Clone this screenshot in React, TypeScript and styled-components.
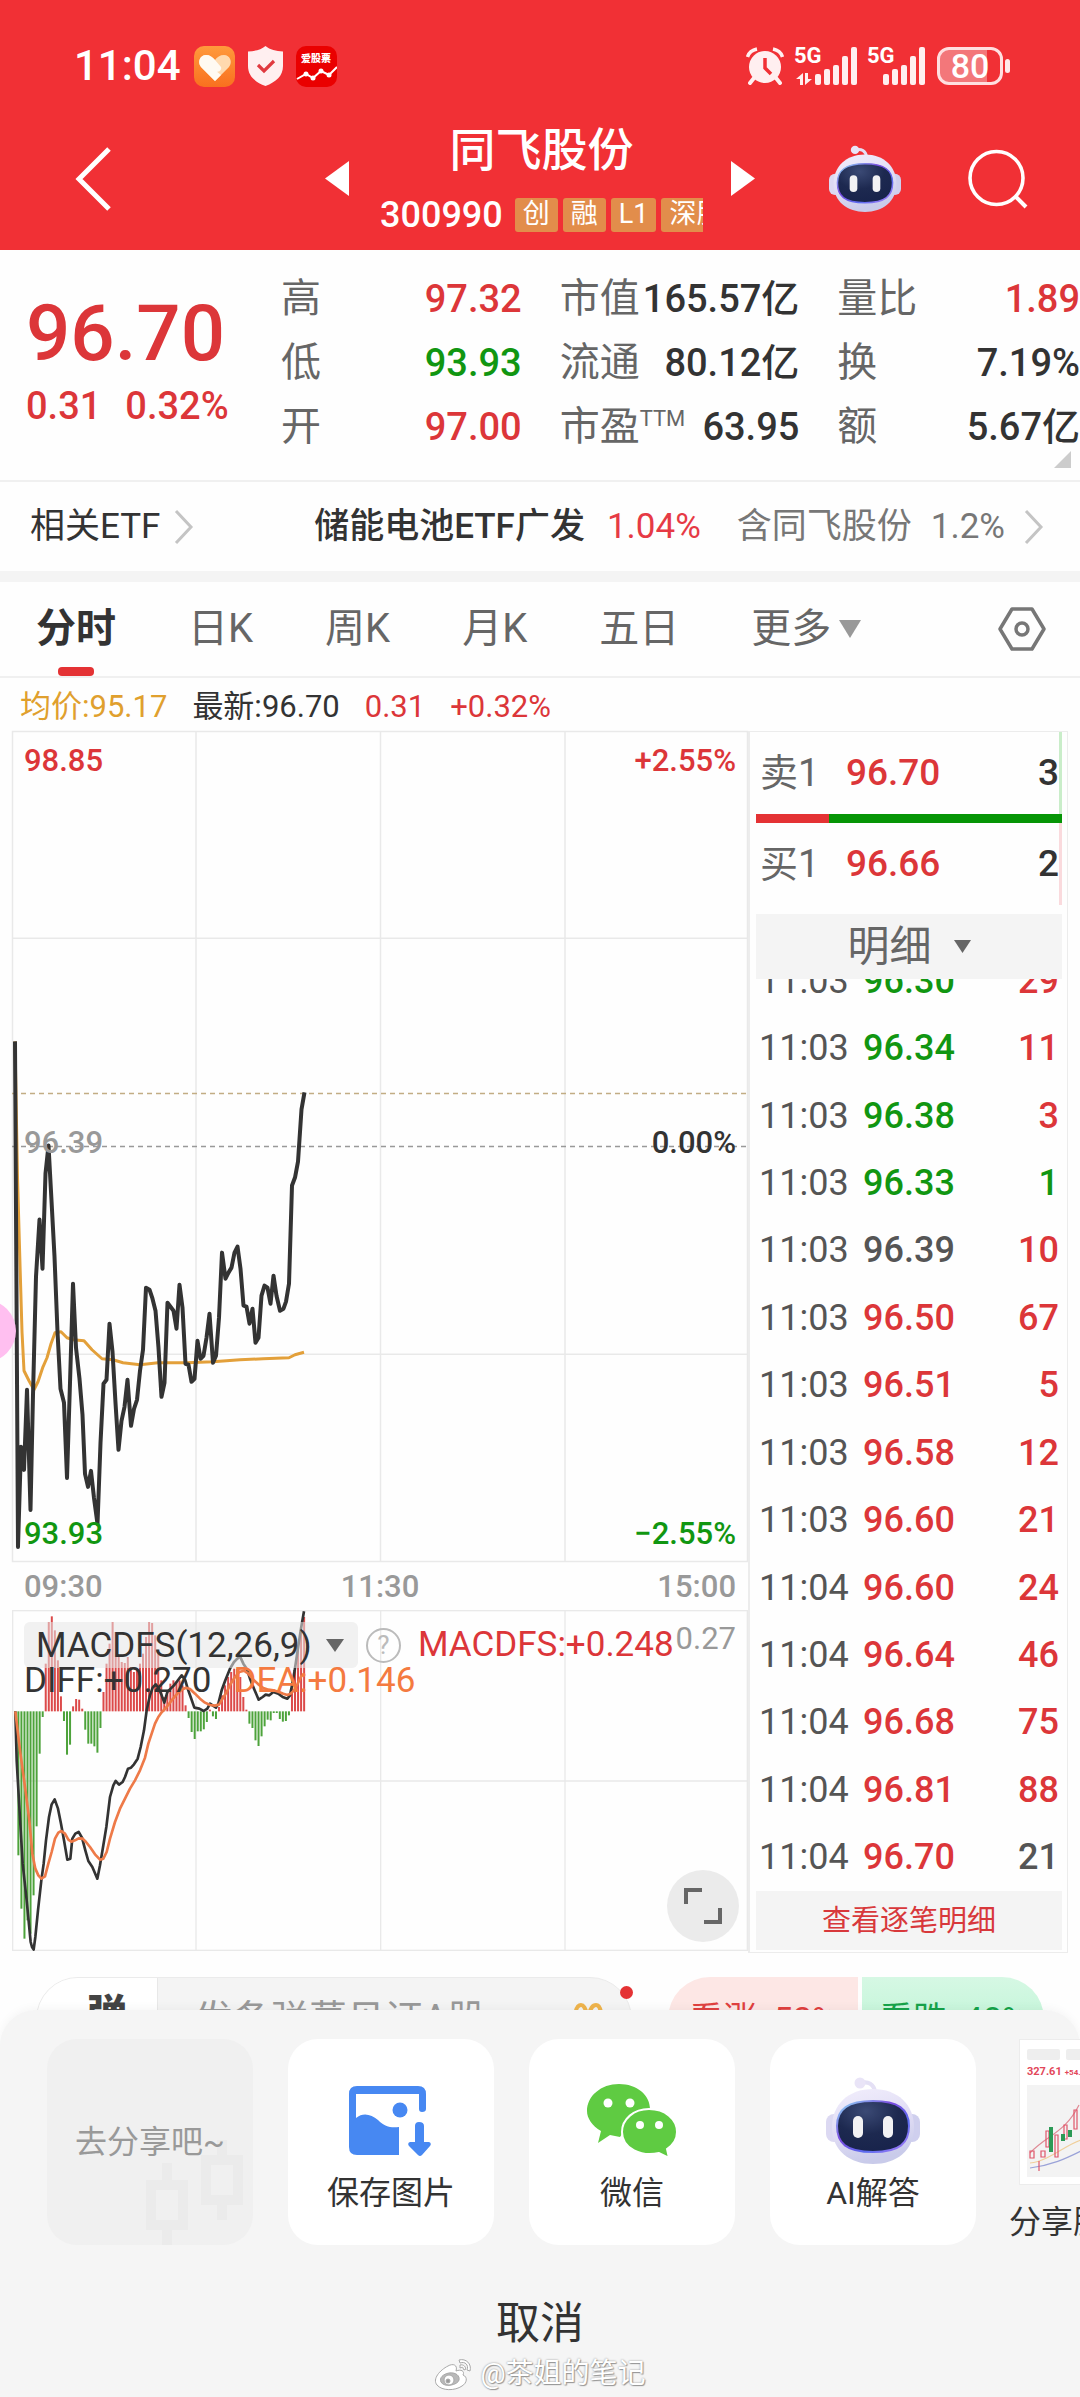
import React from 'react';
import styled, { createGlobalStyle } from 'styled-components';

const RED = '#dc3639';
const GREEN = '#119611';
const INK = '#333333';
const GRAY = '#666666';
const MUTED = '#999999';

const GlobalStyle = createGlobalStyle`
  * { box-sizing: border-box; }
  body {
    margin: 0;
    background: #ffffff;
    color: ${INK};
    font-family: Roboto, "Noto Sans CJK SC", sans-serif;
  }
  button, input {
    font: inherit;
    color: inherit;
    border: 0;
    padding: 0;
    margin: 0;
    background: none;
  }
  a { color: inherit; text-decoration: none; }
  svg { display: block; flex: none; }
`;

const Page = styled.div`
  position: relative;
  display: flex;
  flex-direction: column;
  min-height: 100vh;
  overflow: hidden;
  background: #fefefe;
`;

/* ---------- header ---------- */
const Header = styled.header`
  background: #f13035;
  color: #ffffff;
  height: 250px;
  display: flex;
  flex-direction: column;
`;

const StatusBar = styled.div`
  display: flex;
  align-items: center;
  justify-content: space-between;
  height: 66px;
  margin-top: 33px;
  padding: 0 70px 0 74px;
`;

const StatusGroup = styled.div<{ $gap: number }>`
  display: flex;
  align-items: center;
  gap: ${(p) => p.$gap}px;
`;

const Clock = styled.time`
  font-size: 42px;
  font-weight: 500;
  line-height: 48px;
`;

const AppBadge = styled.div`
  width: 41px;
  height: 41px;
  border-radius: 10px;
  background: #ea0000;
  display: flex;
  flex-direction: column;
  align-items: center;
  padding-top: 6px;
  font-size: 10px;
  font-weight: 900;
  line-height: 14px;
`;

const Battery = styled.div`
  display: flex;
  align-items: center;
  gap: 2px;
  &::after {
    content: "";
    width: 5px;
    height: 14px;
    border-radius: 3px;
    background: #ffe9ea;
  }
`;

const BatteryBody = styled.div`
  width: 66px;
  height: 38px;
  border: 3px solid #ffdfe0;
  border-radius: 12px;
  background: linear-gradient(90deg, #f3777a 78%, transparent 78%);
  font-size: 34px;
  font-weight: 500;
  line-height: 33px;
  text-align: center;
`;

const NavBar = styled.nav`
  flex: 1;
  display: grid;
  grid-template-columns: 325px 24px 1fr 24px 325px;
  align-items: center;
  padding-top: 8px;
`;

const IconButton = styled.button`
  display: inline-flex;
  align-items: center;
  justify-content: center;
`;

const NavStart = styled.div`
  padding-left: 75px;
  display: flex;
`;

const NavEnd = styled.div`
  padding: 0 52px 0 74px;
  display: flex;
  align-items: center;
  justify-content: space-between;
`;

const Title = styled.div`
  min-width: 0;
  display: flex;
  flex-direction: column;
  align-items: center;
  padding: 0 28px 4px 31px;
`;

const StockName = styled.h1`
  margin: 0;
  font-size: 46px;
  line-height: 62px;
  font-weight: 500;
`;

const CodeRow = styled.div`
  width: 100%;
  display: flex;
  align-items: center;
  gap: 5px;
  margin-top: 14px;
  overflow: hidden;
  white-space: nowrap;
`;

const Code = styled.span`
  font-size: 36px;
  line-height: 40px;
  font-weight: 500;
  margin-right: 7px;
`;

const Tag = styled.span`
  flex: none;
  height: 34px;
  padding: 0 8px;
  border-radius: 3px;
  background: #e28d4b;
  font-size: 27px;
  line-height: 33px;
`;

/* ---------- quote ---------- */
const Quote = styled.section`
  position: relative;
  display: grid;
  grid-template-columns: 217px 241fr 240fr 243fr;
  column-gap: 38px;
  padding: 16px 0 22px 26px;
  border-bottom: 2px solid #f0f0f0;
`;

const PriceBlock = styled.div`
  padding-top: 28px;
  color: ${RED};
  white-space: nowrap;
`;

const Price = styled.div`
  font-size: 78px;
  line-height: 80px;
  font-weight: 500;
`;

const Change = styled.div`
  display: flex;
  gap: 24px;
  margin-top: 10px;
  font-size: 38px;
  font-weight: 500;
  line-height: 44px;
`;

const StatList = styled.dl`
  margin: 0;
  min-width: 0;
`;

const Stat = styled.div`
  display: flex;
  justify-content: space-between;
  height: 64px;
  line-height: 66px;
  white-space: nowrap;
`;

const StatLabel = styled.dt`
  font-size: 40px;
  color: ${GRAY};
  sup {
    font-size: 22px;
    line-height: 22px;
    vertical-align: 14px;
  }
`;

const StatValue = styled.dd<{ $color: string }>`
  margin: 0;
  font-size: 38px;
  font-weight: 500;
  color: ${(p) => p.$color};
`;

const Corner = styled.span`
  position: absolute;
  right: 9px;
  bottom: 12px;
  border-left: 17px solid transparent;
  border-bottom: 17px solid #cccccc;
`;

/* ---------- related ETF ---------- */
const EtfRow = styled.section`
  display: flex;
  align-items: center;
  justify-content: space-between;
  height: 89px;
  padding: 0 36px 0 30px;
  font-size: 35px;
  line-height: 48px;
  white-space: nowrap;
`;

const EtfLink = styled.a`
  display: flex;
  align-items: center;
`;

const EtfName = styled.strong`
  font-weight: 500;
`;

const EtfRate = styled.span`
  color: #e63a45;
  margin: 0 36px 0 22px;
`;

const EtfNote = styled.span`
  color: #777777;
  margin-right: 19px;
`;

const Band = styled.div`
  height: 11px;
  background: #f4f4f4;
`;

/* ---------- tabs ---------- */
const Tabs = styled.div`
  display: flex;
  align-items: stretch;
  height: 96px;
  gap: 72px;
  padding: 0 34px 0 36px;
  border-bottom: 2px solid #f0f0f0;
`;

const Tab = styled.button<{ $active?: boolean }>`
  position: relative;
  display: flex;
  align-items: center;
  gap: 8px;
  font-size: 40px;
  line-height: 56px;
  color: ${(p) => (p.$active ? INK : GRAY)};
  font-weight: ${(p) => (p.$active ? 700 : 400)};
  &::after {
    content: "";
    display: ${(p) => (p.$active ? 'block' : 'none')};
    position: absolute;
    left: 50%;
    bottom: 0;
    width: 36px;
    height: 9px;
    margin-left: -18px;
    border-radius: 4px;
    background: #e43234;
  }
`;

const TabEnd = styled.div`
  margin-left: auto;
  display: flex;
  align-items: center;
`;

const Legend = styled.div`
  display: flex;
  gap: 25px;
  height: 53px;
  padding: 6px 20px 0;
  font-size: 31px;
  line-height: 46px;
  white-space: nowrap;
`;

const Tone = styled.span<{ $color: string }>`
  color: ${(p) => p.$color};
`;

/* ---------- charts ---------- */
const Board = styled.main`
  display: grid;
  grid-template-columns: minmax(0, 736fr) minmax(0, 320fr);
  padding: 0 12px;
`;

const ChartColumn = styled.div`
  min-width: 0;
`;

const ChartBox = styled.div<{ $height: number }>`
  position: relative;
  height: ${(p) => p.$height}px;
`;

const Plot = styled.svg`
  width: 100%;
  height: 100%;
  overflow: visible;
`;

const AxisRow = styled.div<{ $top: number }>`
  position: absolute;
  left: 12px;
  right: 12px;
  top: ${(p) => p.$top}px;
  display: flex;
  justify-content: space-between;
  font-size: 31px;
  font-weight: 500;
  line-height: 36px;
`;

const TimeAxis = styled.div`
  display: flex;
  justify-content: space-between;
  padding: 0 12px;
  height: 48px;
  font-size: 31px;
  font-weight: 500;
  line-height: 50px;
  color: ${MUTED};
`;

const MacdHead = styled.div`
  position: absolute;
  left: 12px;
  right: 12px;
  top: 12px;
  display: flex;
  align-items: center;
  white-space: nowrap;
`;

const MacdSelect = styled.button`
  display: flex;
  align-items: center;
  justify-content: space-between;
  width: 334px;
  height: 46px;
  padding: 0 14px 0 12px;
  border-radius: 6px;
  background: rgba(230, 230, 230, 0.55);
  font-size: 35px;
`;

const MacdValue = styled.span`
  font-size: 35px;
  line-height: 46px;
  color: ${RED};
`;

const MacdMax = styled.span`
  position: absolute;
  right: 0;
  top: -1px;
  font-size: 31px;
  line-height: 36px;
  color: ${MUTED};
`;

const MacdSub = styled.div`
  position: absolute;
  left: 12px;
  top: 51px;
  display: flex;
  gap: 22px;
  font-size: 35px;
  line-height: 40px;
  white-space: nowrap;
`;

const HelpButton = styled(IconButton)`
  width: 35px;
  height: 35px;
  margin: 0 17px 0 8px;
  border: 2px solid #bbbbbb;
  border-radius: 50%;
  color: #bbbbbb;
  font-size: 26px;
  line-height: 30px;
`;

const ExpandButton = styled(IconButton)`
  position: absolute;
  right: 9px;
  bottom: 9px;
  width: 72px;
  height: 72px;
  border-radius: 50%;
  background: #ebebeb;
`;

const FloatingDot = styled.div`
  position: absolute;
  left: -58px;
  top: 569px;
  width: 62px;
  height: 62px;
  border-radius: 50%;
  background: #ffbff0;
`;

/* ---------- order book ---------- */
const Book = styled.aside`
  min-width: 0;
  display: flex;
  flex-direction: column;
  border: 1px solid #ececec;
  border-left: 2px solid #ececec;
  padding: 0 5px 2px 6px;
`;

const BookRow = styled.div<{ $edge: string }>`
  display: grid;
  grid-template-columns: 86px 1fr auto;
  align-items: center;
  height: 82px;
  padding-left: 4px;
  border-right: 3px solid ${(p) => p.$edge};
  font-size: 37px;
  font-weight: 500;
  line-height: 50px;
`;

const BookLabel = styled.span`
  font-size: 38px;
  font-weight: 400;
  color: ${GRAY};
`;

const BookPrice = styled.span`
  color: ${RED};
`;

const Ratio = styled.div`
  height: 9px;
  background: linear-gradient(90deg, #e43234 24%, #069506 24%);
`;

const DetailButton = styled.button`
  display: flex;
  flex: none;
  align-items: center;
  justify-content: center;
  gap: 22px;
  height: 65px;
  margin-top: 9px;
  background: #f4f4f4;
  color: ${GRAY};
  font-size: 42px;
  line-height: 60px;
`;

const Ticks = styled.div`
  height: 912px;
  display: flex;
  flex-direction: column;
  justify-content: flex-end;
  overflow: hidden;
`;

const TickTable = styled.table`
  width: 100%;
  height: 944px;
  flex: none;
  border-collapse: collapse;
  font-size: 36px;
  font-weight: 500;
  line-height: 40px;
  color: #555555;
  td { padding: 0; }
`;

const TimeCell = styled.td`
  width: 107px;
  padding-left: 3px !important;
  font-weight: 400;
`;

const PriceCell = styled.td<{ $color: string }>`
  color: ${(p) => p.$color};
`;

const VolumeCell = styled.td<{ $color: string }>`
  color: ${(p) => p.$color};
  text-align: right;
  padding-right: 3px !important;
`;

const MoreLink = styled.a`
  height: 59px;
  background: #f4f4f4;
  color: #d8383b;
  font-size: 29px;
  line-height: 60px;
  text-align: center;
`;

/* ---------- comment bar ---------- */
const CommentBar = styled.div`
  display: flex;
  justify-content: space-between;
  height: 84px;
  margin-top: 24px;
  padding: 0 36px;
`;

const CommentBox = styled.form`
  position: relative;
  display: flex;
  width: 596px;
  border: 1px solid #ebebeb;
  border-radius: 42px;
  background: #f4f4f4;
`;

const CommentToggle = styled.button`
  width: 121px;
  border-right: 1px solid #e8e8e8;
  border-radius: 42px 0 0 42px;
  background: #ffffff;
  font-size: 40px;
  font-weight: 900;
  line-height: 40px;
  padding: 0 4px 8px 24px;
  color: #444444;
`;

const CommentInput = styled.input`
  flex: 1;
  min-width: 0;
  padding-left: 37px;
  font-size: 38px;
  line-height: 80px;
  &::placeholder { color: ${MUTED}; opacity: 1; }
`;

const EmojiSlot = styled.span`
  padding: 24px 26px 0 0;
`;

const RedDot = styled.span`
  position: absolute;
  top: 8px;
  right: -2px;
  width: 13px;
  height: 13px;
  border-radius: 50%;
  background: #e43234;
`;

const Votes = styled.div`
  display: flex;
  gap: 4px;
`;

const Vote = styled.button<{ $up?: boolean }>`
  width: ${(p) => (p.$up ? 190 : 182)}px;
  background: ${(p) => (p.$up ? '#fde7e5' : 'linear-gradient(180deg, #d6f8e4, #b4f3d0)')};
  color: ${(p) => (p.$up ? '#e0403f' : '#16a34a')};
  border-radius: ${(p) => (p.$up ? '42px 0 0 42px' : '0 42px 42px 0')};
  font-size: 34px;
  line-height: 80px;
  text-align: center;
  white-space: pre;
`;

/* ---------- share sheet ---------- */
const Sheet = styled.section`
  position: relative;
  flex: 1;
  display: flex;
  flex-direction: column;
  margin-top: -51px;
  padding-top: 29px;
  border-radius: 36px 36px 0 0;
  background: #f5f5f5;
  box-shadow: 0 -2px 10px rgba(0, 0, 0, 0.04);
`;

const ShareRow = styled.div`
  display: flex;
  gap: 35px;
  padding-left: 47px;
  overflow: hidden;
`;

const ShareCard = styled.button<{ $ghost?: boolean }>`
  position: relative;
  flex: none;
  display: flex;
  flex-direction: column;
  align-items: center;
  justify-content: ${(p) => (p.$ghost ? 'center' : 'flex-start')};
  width: 206px;
  height: 206px;
  padding-top: ${(p) => (p.$ghost ? 0 : 34)}px;
  border-radius: 30px;
  background: ${(p) => (p.$ghost ? '#f0f0f0' : '#ffffff')};
  color: ${(p) => (p.$ghost ? MUTED : INK)};
  font-size: 32px;
  line-height: 48px;
  overflow: hidden;
`;

const CardIcon = styled.span`
  height: 96px;
  display: flex;
  align-items: center;
`;

const GhostCandles = styled.svg`
  position: absolute;
  right: 6px;
  bottom: 0;
`;

const GhostText = styled.span`
  position: relative;
`;

const ShareImage = styled.button`
  flex: none;
  display: flex;
  flex-direction: column;
  align-items: center;
  width: 124px;
  font-size: 32px;
  line-height: 48px;
  white-space: nowrap;
`;

const Poster = styled.span`
  display: flex;
  flex-direction: column;
  width: 108px;
  height: 146px;
  margin-bottom: 13px;
  padding: 9px 7px;
  border: 1px solid #ececec;
  background: #ffffff;
  color: #e2485a;
  overflow: hidden;
`;

const PosterBars = styled.span`
  display: flex;
  gap: 6px;
  height: 11px;
  i { width: 33px; height: 11px; border-radius: 2px; background: #eeeeee; }
`;

const PosterPrice = styled.span`
  display: flex;
  align-items: baseline;
  gap: 3px;
  font-size: 11px;
  font-weight: 700;
  line-height: 24px;
  small { font-size: 8px; }
`;

const Cancel = styled.button`
  display: block;
  align-self: center;
  margin-top: 45px;
  padding: 0 40px;
  font-size: 44px;
  line-height: 66px;
`;

const Watermark = styled.div`
  display: flex;
  align-items: center;
  justify-content: center;
  gap: 7px;
  height: 34px;
  font-size: 28px;
  line-height: 34px;
  color: #ffffff;
  text-shadow: 0 0 2px #8a8a8a, 1px 1px 1px #9a9a9a;
`;

/* ---------- drawings ---------- */
const Triangle = ({ dir, w, h, color }: { dir: 'left' | 'right' | 'down'; w: number; h: number; color: string }) => {
  const d = { left: 'M10 0V10L0 5Z', right: 'M0 0V10L10 5Z', down: 'M0 0H10L5 10Z' }[dir];
  return (
    <svg width={w} height={h} viewBox="0 0 10 10" preserveAspectRatio="none" aria-hidden="true">
      <path d={d} fill={color} />
    </svg>
  );
};

const ChevronIcon = styled.svg<{ $gap: number }>`
  margin-left: ${(p) => p.$gap}px;
`;

const Chevron = ({ gap }: { gap: number }) => (
  <ChevronIcon $gap={gap} width="20" height="36" viewBox="0 0 20 36" fill="none" stroke="#c4c4c4" strokeWidth="3" aria-hidden="true">
    <path d="M2 2L17 18L2 34" />
  </ChevronIcon>
);

const Robot = ({ id, w, h }: { id: string; w: number; h: number }) => (
  <svg width={w} height={h} viewBox="0 0 94 88" aria-hidden="true">
    <defs>
      <linearGradient id={`${id}-shell`} x1="0" y1="0" x2="0.3" y2="1">
        <stop offset="0" stopColor="#f2eefc" />
        <stop offset="0.6" stopColor="#dfdcf4" />
        <stop offset="1" stopColor="#c9cbea" />
      </linearGradient>
      <linearGradient id={`${id}-rim`} x1="0" y1="0" x2="1" y2="1">
        <stop offset="0" stopColor="#8fe0f5" />
        <stop offset="0.4" stopColor="#7a4be0" />
        <stop offset="0.7" stopColor="#5b6cf0" />
        <stop offset="1" stopColor="#b07cf5" />
      </linearGradient>
      <radialGradient id={`${id}-face`} cx="0.4" cy="0.2" r="0.9">
        <stop offset="0" stopColor="#3b4a75" />
        <stop offset="0.5" stopColor="#1d2950" />
        <stop offset="1" stopColor="#17224a" />
      </radialGradient>
    </defs>
    <path d="M35 6C42 4 48 7 49 15" fill="none" stroke="#e4e0f5" strokeWidth="4" />
    <circle cx="34" cy="6" r="5.5" fill="#e9e4f7" />
    <rect x="0" y="37" width="16" height="28" rx="8" fill="#dcd9f2" />
    <rect x="78" y="37" width="16" height="28" rx="8" fill="#cfcfee" />
    <path d="M47 12C72 12 88 28 88 50C88 74 70 87 47 87C24 87 6 74 6 50C6 28 22 12 47 12Z" fill={`url(#${id}-shell)`} />
    <path d="M47 24C72 24 83 32 83 49C83 66 74 75 47 75C20 75 11 66 11 49C11 32 22 24 47 24Z" fill={`url(#${id}-face)`} stroke={`url(#${id}-rim)`} strokeWidth="2" />
    <rect x="27" y="39" width="10" height="22" rx="5" fill="#f2f2f4" />
    <rect x="57" y="39" width="10" height="22" rx="5" fill="#f2f2f4" />
  </svg>
);

const HeartIcon = () => (
  <svg width="41" height="41" viewBox="0 0 41 41" aria-hidden="true">
    <defs>
      <linearGradient id="heart-bg" x1="0" y1="0" x2="0" y2="1">
        <stop offset="0" stopColor="#ff9a3c" />
        <stop offset="1" stopColor="#f9701f" />
      </linearGradient>
    </defs>
    <rect width="41" height="41" rx="10" fill="url(#heart-bg)" />
    <path d="M21 35L7 21C3 16 6 9 12 9C16 9 19 11 21 14C23 11 26 9 30 9C36 9 39 16 35 21Z" fill="#ffd9ae" />
    <path d="M21 35L7 21C3 16 6 9 12 9C16 9 18 11 21 14L27 21C28 24 25 27 21 25L17 21L27 29Z" fill="#fffaf2" />
  </svg>
);

const ShieldIcon = () => (
  <svg width="35" height="40" viewBox="0 0 35 40" aria-hidden="true">
    <path d="M17.500 0C22 4 28 5 35 5.500V20C35 30 28 36 17.500 40C7 36 0 30 0 20V5.500C7 5 13 4 17.500 0Z" fill="#ffeff0" />
    <path d="M10 19L16 25L26 15" fill="none" stroke="#e03a40" strokeWidth="3.200" />
  </svg>
);

const AlarmIcon = () => (
  <svg width="38" height="38" viewBox="0 0 38 38" aria-hidden="true">
    <circle cx="19" cy="20" r="16" fill="#ffeff0" />
    <path d="M1.500 10C3 5 6 3 11 2M36.500 10C35 5 32 3 27 2" fill="none" stroke="#ffeff0" strokeWidth="3.500" />
    <path d="M8 31L4 36M30 31L34 36" stroke="#ffeff0" strokeWidth="4" strokeLinecap="round" />
    <path d="M19 11V21L25 27" fill="none" stroke="#f13035" strokeWidth="3.500" />
  </svg>
);

const SignalLabel = styled.span`
  position: absolute;
  left: -2px;
  top: -2px;
  font-size: 22px;
  font-weight: 700;
  line-height: 22px;
`;

const SignalBox = styled.span<{ $w: number }>`
  position: relative;
  width: ${(p) => p.$w}px;
  height: 38px;
`;

const Signal = ({ data }: { data?: boolean }) => {
  const w = data ? 61 : 56;
  return (
    <SignalBox $w={w}>
      <SignalLabel>5G</SignalLabel>
      <svg width={w} height="38" viewBox={`0 0 ${w} 38`} fill="#ffeff0" aria-hidden="true">
        {[38, 29, 20, 16, 11].map((h, i) => (
          <rect key={h} x={w - 6 - i * 9} y={38 - h} width="6" height={h} rx="2" />
        ))}
        {data && <path d="M0 32L7 26V38H4V32ZM16 32L9 38V26H12V32Z" />}
      </svg>
    </SignalBox>
  );
};

const SearchIcon = () => (
  <svg width="60" height="60" viewBox="0 0 60 60" fill="none" stroke="#ffffff" strokeWidth="3.600" aria-hidden="true">
    <circle cx="28.500" cy="29" r="26.500" />
    <path d="M47 47L58 58" strokeWidth="4" />
  </svg>
);

const SaveIcon = () => (
  <svg width="84" height="70" viewBox="0 0 84 70" aria-hidden="true">
    <path d="M8 0H69Q77 0 77 8V23Q77 26 73 26Q70 26 70 23V8H7V32C14 26 22 28 29 34C36 41 42 42 50 41V69H8Q0 69 0 61V8Q0 0 8 0Z" fill="#4788f2" />
    <circle cx="51" cy="24" r="7.500" fill="#4788f2" />
    <path d="M66 40Q66 36 70 36Q75 36 75 40V56H80Q83 57 81 60L73 69Q71 71 69 69L60 60Q58 57 61 56H66Z" fill="#4788f2" />
  </svg>
);

const WechatIcon = () => (
  <svg width="90" height="74" viewBox="0 0 90 74" fill="#5fcb42" aria-hidden="true">
    <path d="M32 0C50 0 63 11 63 25C47 25 34 36 35 50L33 53L23 51L11 59L14 47C5 42 0 34 0 27C0 12 14 0 32 0Z" />
    <path d="M62 25C78 25 90 35 90 48C90 55 86 61 80 65L82 74L72 69C55 73 35 65 35 48C35 35 47 25 62 25Z" stroke="#ffffff" strokeWidth="2" />
    <circle cx="21" cy="19" r="4.500" fill="#ffffff" />
    <circle cx="43" cy="19" r="4.500" fill="#ffffff" />
    <circle cx="53" cy="41" r="4" fill="#ffffff" />
    <circle cx="72" cy="41" r="4" fill="#ffffff" />
  </svg>
);

const WeiboIcon = () => (
  <svg width="39" height="34" viewBox="0 0 39 34" fill="#ffffff" stroke="#a8a8a8" strokeWidth="1" aria-hidden="true">
    <path d="M14 9C19 6 24 8 22 14C27 12 31 14 29 18C34 20 33 26 28 29C21 34 8 34 3 28C-2 22 6 13 14 9Z" />
    <path d="M15 16C22 15 26 19 25 23C24 28 10 31 7 25C5 21 9 17 15 16Z" fill="#b9b9b9" />
    <circle cx="15" cy="23" r="5" />
    <circle cx="14" cy="24" r="2" fill="#999999" />
    <path d="M25 3C32 1 38 7 36 14L33 13C35 8 31 4 26 6ZM26 8C29 7 33 10 31 13L29 12C30 10 28 10 26 11Z" />
  </svg>
);

/* ---------- data ---------- */
const stats = [
  [
    { label: '高', value: '97.32', color: RED },
    { label: '低', value: '93.93', color: GREEN },
    { label: '开', value: '97.00', color: RED },
  ],
  [
    { label: '市值', value: '165.57亿', color: INK },
    { label: '流通', value: '80.12亿', color: INK },
    { label: '市盈', sup: 'TTM', value: '63.95', color: INK },
  ],
  [
    { label: '量比', value: '1.89', color: RED },
    { label: '换', value: '7.19%', color: INK },
    { label: '额', value: '5.67亿', color: INK },
  ],
] as { label: string; value: string; color: string; sup?: string }[][];

const D = '#555555';
const ticks: [string, string, string, string, string][] = [
  ['11:03', '96.30', GREEN, '29', RED],
  ['11:03', '96.34', GREEN, '11', RED],
  ['11:03', '96.38', GREEN, '3', RED],
  ['11:03', '96.33', GREEN, '1', GREEN],
  ['11:03', '96.39', D, '10', RED],
  ['11:03', '96.50', RED, '67', RED],
  ['11:03', '96.51', RED, '5', RED],
  ['11:03', '96.58', RED, '12', RED],
  ['11:03', '96.60', RED, '21', RED],
  ['11:04', '96.60', RED, '24', RED],
  ['11:04', '96.64', RED, '46', RED],
  ['11:04', '96.68', RED, '75', RED],
  ['11:04', '96.81', RED, '88', RED],
  ['11:04', '96.70', RED, '21', D],
];

const priceLine =
  '3,310 6,815 9,715 12,738 15,658 18.5,778 21,663 24,545 27.5,488 30.5,537 33.5,442 36.5,414 39.5,469 42.5,525 45.5,600 48.5,657 52,671 55,746 58,651 61,552 64,616 67.5,647 70.5,683 73,742 76,755 79,739 82,766 85.5,792 88.5,711 91.5,652 94.5,648 97.5,592 100.5,620 103.5,671 106.5,718 109.5,689 112.5,675 115.5,648 119,694 122,677 125,668 128,639 131,618 134,556 137.5,558 140.5,567 143.5,579 146.5,616 149.5,665 152.5,651 155.5,571 158.5,575 161.5,579 164.5,597 167.5,553 170.5,576 173.5,632 176.5,633 179.5,650 182.5,647 185.5,609 188.5,627 191.5,624 194.5,606 197.5,582 201,631 204,624 207,586 210,521 213.5,547 216.5,541 219.5,536 222.5,521 225.5,515 228.5,537 231.5,574 234.5,575 237.5,592 240.5,577 243.5,611 246.5,606 249.5,564 252.5,554 255.5,556 258.5,572 261.5,544 264.5,564 268,579 271.5,577 274,570 277,552 280,454 283,446 286,430 289.5,378 292.5,361';

const averageLine =
  '3,310 5.5,446 8,533 10,600 12,639 17,649 22,658 26,650 31,635 35,626 39,612 43,601 49,600 55,606 61,608 72,609 80,618 90,627 101,628 111,631 128,633 146,631 175,631 201,630 228,628 251,627 277,626 283,623 292,620.5';

const MACD_ZERO = 304;
const macdBars = [
  0, -432, -592, -682, -627, -667, -552, -345, -127, -17, 143, 268, 285, 243, 153, 45, -29, -130, -100, 15, 37, 35, 8,
  -55, -97, -97, -105, -124, -50, 58, 143, 203, 268, 238, 163, 148, 145, 163, 133, 118, 128, 143, 173, 223, 268, 265,
  228, 178, 93, 43, 63, 83, 93, 88, 93, 78, 18, -20, -62, -83, -60, -60, -54, -32, 5, -15, -23, 13, 48, 78, 103, 118,
  128, 128, 103, 43, 5, -37, -50, -87, -104, -75, -45, -25, -27, -5, -5, -23, -31, -29, -12, 78, 133, 183, 238, 283,
];

const diffLine =
  '46,333 50,480 58,620 68,790 80,900 92,1025 96,1040 101,1048 106,1010 114,930 124,840 131,790 138,720 147,650 155,612 164,597 174,625 183,670 192,720 202,778 211,775 217,715 226,700 236,695 246,712 256,750 265,782 277,800 292,835 300,795 310,735 319,680 330,590 340,555 347,542 357,553 368,545 375,530 384,505 393,502 402,492 413,475 422,440 432,390 440,330 450,285 458,262 467,252 477,265 485,285 493,307 502,275 512,265 522,255 532,242 545,225 556,240 563,265 572,290 583,322 598,325 611,332 622,325 630,310 648,322 655,310 665,270 676,240 690,205 702,185 712,175 720,168 730,190 740,205 750,235 762,265 776,298 788,290 797,283 808,285 820,275 835,280 848,290 862,295 870,285 877,250 884,210 893,150 903,85 912,33';

const deaLine =
  '46,333 60,450 75,560 88,660 97,760 106,805 115,825 124,835 135,828 145,790 155,755 165,715 175,697 184,692 195,700 205,718 214,724 225,720 236,714 248,715 258,725 270,740 285,762 300,778 310,775 320,755 330,715 345,665 360,625 375,595 390,565 405,540 420,510 435,472 445,430 455,400 465,370 475,350 485,336 500,320 515,300 530,282 545,268 558,262 570,266 585,280 600,295 615,307 630,314 645,316 657,313 668,295 680,275 692,250 705,230 718,215 732,211 745,220 760,238 775,252 790,263 805,268 820,270 835,274 850,280 862,284 872,280 882,270 893,250 905,225';

const PriceChart = () => (
  <Plot viewBox="0 0 736 830" preserveAspectRatio="none" role="img" aria-label="分时走势">
    <g stroke="#e9e9e9" strokeWidth="1.500" fill="none">
      <rect x="0.500" y="0.500" width="735" height="829" />
      <path d="M184 0V830M368.500 0V830M553 0V830M0 207H736M0 622.500H736" />
    </g>
    <path d="M0 362H736" stroke="#c2ad84" strokeWidth="1.500" strokeDasharray="5 4" />
    <path d="M0 415H736" stroke="#999999" strokeWidth="1.500" strokeDasharray="5 4" />
    <polyline points={averageLine} fill="none" stroke="#e3a03a" strokeWidth="3" strokeLinejoin="round" />
    <polyline points={priceLine} fill="none" stroke="#333333" strokeWidth="4" strokeLinejoin="round" />
  </Plot>
);

const MacdChart = () => (
  <Plot viewBox="0 0 2208 1023" preserveAspectRatio="none" role="img" aria-label="MACD">
    <g stroke="#e9e9e9" strokeWidth="4" fill="none">
      <rect x="2" y="2" width="2204" height="1019" />
      <path d="M552 0V1023M1106 0V1023M1659 0V1023M0 513H2208" />
    </g>
    {macdBars.map((v, i) => (
      <rect
        key={i}
        x={7 + i * 9.12}
        width="6"
        y={v > 0 ? MACD_ZERO - v : MACD_ZERO}
        height={Math.abs(v)}
        fill={v > 0 ? '#dc4a4a' : '#4da33b'}
      />
    ))}
    <g transform="translate(-36 -29)" fill="none" strokeLinejoin="round">
      <polyline points={diffLine} stroke="#333333" strokeWidth="8" />
      <polyline points={deaLine} stroke="#ee7a48" strokeWidth="8" />
    </g>
  </Plot>
);

export default function App() {
  return (
    <Page>
      <GlobalStyle />
      <Header>
        <StatusBar>
          <StatusGroup $gap={13}>
            <Clock>11:04</Clock>
            <HeartIcon />
            <ShieldIcon />
            <AppBadge>
              爱股票
              <svg width="41" height="16" viewBox="0 0 41 16" fill="none" stroke="#ffffff" strokeWidth="2" aria-hidden="true">
                <path d="M1 13L10 8L17 12L25 5L33 9L41 1" />
                <g fill="#ffffff" stroke="none">
                  <circle cx="10" cy="8" r="2.500" />
                  <circle cx="17" cy="12" r="2.500" />
                  <circle cx="25" cy="5" r="2.500" />
                  <circle cx="33" cy="9" r="2.500" />
                </g>
              </svg>
            </AppBadge>
          </StatusGroup>
          <StatusGroup $gap={12}>
            <AlarmIcon />
            <Signal data />
            <Signal />
            <Battery>
              <BatteryBody>80</BatteryBody>
            </Battery>
          </StatusGroup>
        </StatusBar>
        <NavBar>
          <NavStart>
            <IconButton aria-label="返回">
              <svg width="37" height="64" viewBox="0 0 37 64" fill="none" stroke="#ffffff" strokeWidth="5" aria-hidden="true">
                <path d="M34 2L4 32L34 62" />
              </svg>
            </IconButton>
          </NavStart>
          <IconButton aria-label="上一只">
            <Triangle dir="left" w={24} h={35} color="#ffffff" />
          </IconButton>
          <Title>
            <StockName>同飞股份</StockName>
            <CodeRow>
              <Code>300990</Code>
              <Tag>创</Tag>
              <Tag>融</Tag>
              <Tag>L1</Tag>
              <Tag>深股通</Tag>
            </CodeRow>
          </Title>
          <IconButton aria-label="下一只">
            <Triangle dir="right" w={24} h={35} color="#ffffff" />
          </IconButton>
          <NavEnd>
            <IconButton aria-label="AI助手">
              <Robot id="nav" w={72} h={68} />
            </IconButton>
            <IconButton aria-label="搜索">
              <SearchIcon />
            </IconButton>
          </NavEnd>
        </NavBar>
      </Header>

      <Quote>
        <PriceBlock>
          <Price>96.70</Price>
          <Change>
            <span>0.31</span>
            <span>0.32%</span>
          </Change>
        </PriceBlock>
        {stats.map((col, i) => (
          <StatList key={i}>
            {col.map((s) => (
              <Stat key={s.label}>
                <StatLabel>
                  {s.label}
                  {s.sup && <sup>{s.sup}</sup>}
                </StatLabel>
                <StatValue $color={s.color}>{s.value}</StatValue>
              </Stat>
            ))}
          </StatList>
        ))}
        <Corner />
      </Quote>

      <EtfRow>
        <EtfLink href="#etf">
          相关ETF
          <Chevron gap={14} />
        </EtfLink>
        <EtfLink href="#etf-detail">
          <EtfName>储能电池ETF广发</EtfName>
          <EtfRate>1.04%</EtfRate>
          <EtfNote>含同飞股份</EtfNote>
          <Tone $color="#777777">1.2%</Tone>
          <Chevron gap={19} />
        </EtfLink>
      </EtfRow>
      <Band />

      <Tabs>
        <Tab $active>分时</Tab>
        <Tab>日K</Tab>
        <Tab>周K</Tab>
        <Tab>月K</Tab>
        <Tab>五日</Tab>
        <Tab>
          更多
          <Triangle dir="down" w={22} h={18} color="#999999" />
        </Tab>
        <TabEnd>
          <IconButton aria-label="设置">
            <svg width="48" height="44" viewBox="0 0 48 44" fill="none" stroke="#777777" strokeWidth="3.500" strokeLinejoin="round" aria-hidden="true">
              <path d="M14 2H34L46 22L34 42H14L2 22Z" />
              <circle cx="24" cy="22" r="6" />
            </svg>
          </IconButton>
        </TabEnd>
      </Tabs>

      <Legend>
        <Tone $color="#e0a02e">均价:95.17</Tone>
        <span>最新:96.70</span>
        <Tone $color={RED}>0.31</Tone>
        <Tone $color={RED}>+0.32%</Tone>
      </Legend>

      <Board>
        <ChartColumn>
          <ChartBox $height={831}>
            <PriceChart />
            <AxisRow $top={12}>
              <Tone $color={RED}>98.85</Tone>
              <Tone $color={RED}>+2.55%</Tone>
            </AxisRow>
            <AxisRow $top={394}>
              <Tone $color={MUTED}>96.39</Tone>
              <span>0.00%</span>
            </AxisRow>
            <AxisRow $top={785}>
              <Tone $color={GREEN}>93.93</Tone>
              <Tone $color={GREEN}>−2.55%</Tone>
            </AxisRow>
            <FloatingDot />
          </ChartBox>
          <TimeAxis>
            <span>09:30</span>
            <span>11:30</span>
            <span>15:00</span>
          </TimeAxis>
          <ChartBox $height={341}>
            <MacdChart />
            <MacdHead>
              <MacdSelect>
                MACDFS(12,26,9)
                <Triangle dir="down" w={18} h={13} color="#666666" />
              </MacdSelect>
              <HelpButton aria-label="指标说明">?</HelpButton>
              <MacdValue>MACDFS:+0.248</MacdValue>
              <MacdMax>0.27</MacdMax>
            </MacdHead>
            <MacdSub>
              <span>DIFF:+0.270</span>
              <Tone $color="#f47a40">DEA:+0.146</Tone>
            </MacdSub>
            <ExpandButton aria-label="全屏">
              <svg width="38" height="38" viewBox="0 0 38 38" fill="none" stroke="#666666" strokeWidth="4" aria-hidden="true">
                <path d="M2 17V3H18M36 21V35H20" />
              </svg>
            </ExpandButton>
          </ChartBox>
        </ChartColumn>

        <Book>
          <BookRow $edge="#c9edc9">
            <BookLabel>卖1</BookLabel>
            <BookPrice>96.70</BookPrice>
            <span>3</span>
          </BookRow>
          <Ratio />
          <BookRow $edge="#fadadd">
            <BookLabel>买1</BookLabel>
            <BookPrice>96.66</BookPrice>
            <span>2</span>
          </BookRow>
          <DetailButton>
            明细
            <Triangle dir="down" w={17} h={13} color="#666666" />
          </DetailButton>
          <Ticks>
            <TickTable>
              <tbody>
                {ticks.map(([time, price, pc, vol, vc], i) => (
                  <tr key={i}>
                    <TimeCell>{time}</TimeCell>
                    <PriceCell $color={pc}>{price}</PriceCell>
                    <VolumeCell $color={vc}>{vol}</VolumeCell>
                  </tr>
                ))}
              </tbody>
            </TickTable>
          </Ticks>
          <MoreLink href="#ticks">查看逐笔明细</MoreLink>
        </Book>
      </Board>

      <CommentBar>
        <CommentBox>
          <CommentToggle type="button">弹</CommentToggle>
          <CommentInput placeholder="发条弹幕见证A股" aria-label="发条弹幕" />
          <EmojiSlot>
            <svg width="34" height="34" viewBox="0 0 34 34" fill="none" stroke="#efb44c" strokeWidth="4" aria-hidden="true">
              <path d="M3 30C3 12 5 3 10 3C14 3 15 10 17 14C19 10 20 3 25 3C30 3 31 12 31 30" />
            </svg>
          </EmojiSlot>
          <RedDot />
        </CommentBox>
        <Votes>
          <Vote $up>看涨  52%</Vote>
          <Vote>看跌  48%</Vote>
        </Votes>
      </CommentBar>

      <Sheet>
        <ShareRow>
          <ShareCard $ghost>
            <GhostCandles width="104" height="110" viewBox="0 0 104 110" fill="none" stroke="#ebebeb" strokeWidth="10" aria-hidden="true">
              <path d="M8 50H40V90H8ZM24 28V50M24 90V110M63 25H95V65H63ZM79 5V25M79 65V85" />
            </GhostCandles>
            <GhostText>去分享吧~</GhostText>
          </ShareCard>
          <ShareCard>
            <CardIcon>
              <SaveIcon />
            </CardIcon>
            保存图片
          </ShareCard>
          <ShareCard>
            <CardIcon>
              <WechatIcon />
            </CardIcon>
            微信
          </ShareCard>
          <ShareCard>
            <CardIcon>
              <Robot id="card" w={94} h={88} />
            </CardIcon>
            AI解答
          </ShareCard>
          <ShareImage>
            <Poster>
              <PosterBars>
                <i />
                <i />
              </PosterBars>
              <PosterPrice>
                327.61<small>+54.60</small>
              </PosterPrice>
              <svg width="92" height="92" viewBox="0 0 92 92" aria-hidden="true">
                <rect width="92" height="92" fill="#f3f3f3" />
                <g fill="none" strokeWidth="1.200">
                  <path d="M3 68C20 50 38 48 52 20" stroke="#e08a95" />
                  <path d="M3 78C22 76 38 60 54 55" stroke="#f0cf9a" />
                  <path d="M3 83C25 80 38 74 54 66" stroke="#9aa2d8" />
                  <path d="M3 66H7V73H3ZM14 66H18V72H14ZM19 46H22V62H19ZM28 50H31V72H28ZM37 40H40V54H37ZM47 25H50V44H47ZM12 76V86" stroke="#e0566a" />
                </g>
                <path d="M22 42H26V67H22ZM34 49H38V56H34ZM41 45H45V52H41Z" fill="#2c9a56" />
              </svg>
            </Poster>
            分享股票
          </ShareImage>
        </ShareRow>
        <Cancel>取消</Cancel>
        <Watermark>
          <WeiboIcon />
          @茶姐的笔记
        </Watermark>
      </Sheet>
    </Page>
  );
}
